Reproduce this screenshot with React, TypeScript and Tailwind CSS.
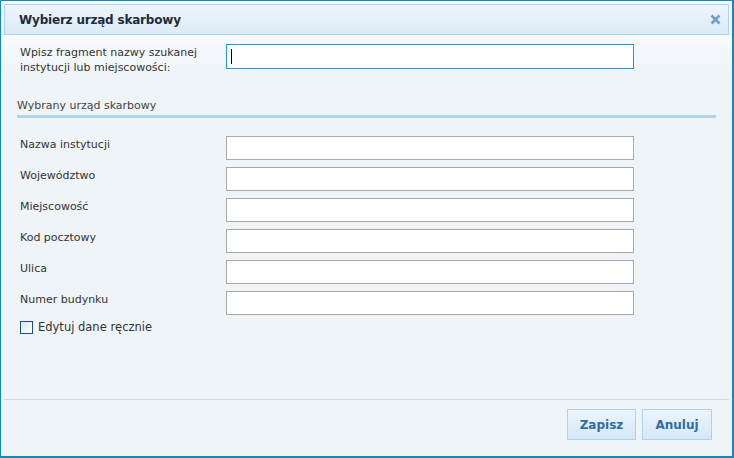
const fields = [
  "Nazwa instytucji",
  "Województwo",
  "Miejscowość",
  "Kod pocztowy",
  "Ulica",
  "Numer budynku",
];

const App = () => {
  return (
    <div
      className="w-[734px] h-[458px] bg-[#eff4f8] border border-[#0a8bc6] border-r-2 border-b-2 flex flex-col text-[#333]"
      style={{ fontFamily: "Tahoma, 'DejaVu Sans', sans-serif" }}
    >
      <div className="bg-gradient-to-b from-[#f9fbfd] to-[#eef3f8] pt-[3px] px-[3px]">
        <div className="h-[31px] border border-[#abd2ef] bg-gradient-to-b from-[#eef5fc] to-[#dcebf8] flex items-center justify-between pl-[14px] pr-[7px]">
          <span className="text-[12px] font-bold text-[#1d2c3a] tracking-[-0.2px]">
            Wybierz urząd skarbowy
          </span>
          <svg width="11" height="11" viewBox="0 0 11 11">
            <path d="M1.5 1.5 L9.5 9.5 M9.5 1.5 L1.5 9.5" stroke="#6ea1cc" strokeWidth="2.6" />
          </svg>
        </div>
      </div>

      <div className="flex-1 flex flex-col bg-gradient-to-b from-[#f9fbfd] to-[#eff4f8] bg-no-repeat [background-size:100%_40px]">
        <div className="flex items-start pt-[9px] pl-[19px]">
          <label className="w-[206px] text-[11px] leading-[15px] text-[#333] pt-[1px]">
            Wpisz fragment nazwy szukanej
            <br />
            instytucji lub miejscowości:
          </label>
          <div className="w-[408px] h-[25px] border border-[#1b9ad6] bg-white flex items-center pl-[4px]">
            <div className="w-px h-[15px] bg-black" />
          </div>
        </div>

        <div className="mt-[21px] mx-[16px] border-b-[3px] border-[#b1d3e9] leading-[15px] pb-[2px]">
          <span className="text-[11px] text-[#444]">Wybrany urząd skarbowy</span>
        </div>

        <div className="flex flex-col gap-[7px] mt-[18px] pl-[19px]">
          {fields.map((f) => (
            <div key={f} className="flex items-start">
              <label className="w-[206px] text-[11px] leading-[15px] pt-[1px] text-[#333]">{f}</label>
              <div className="w-[408px] h-[24px] border border-[#a9a9a9] bg-white" />
            </div>
          ))}
          <div className="flex items-center gap-[5px] mt-[-3px]">
            <div className="w-[13px] h-[13px] border border-[#1e4f82] bg-gradient-to-br from-[#dfe3e8] to-white" />
            <span className="text-[11.5px] text-[#333]">Edytuj dane ręcznie</span>
          </div>
        </div>

        <div className="mt-auto mx-[3px] border-t border-[#d3d9de] h-[57px] flex items-start justify-end gap-[6px] pt-[9px] pr-[17px]">
          <button className="w-[69px] h-[31px] border border-[#abd2ef] bg-gradient-to-b from-[#ebf4fc] to-[#d6e8f7] text-[12px] font-bold text-[#2f6da3]">
            Zapisz
          </button>
          <button className="w-[70px] h-[31px] border border-[#abd2ef] bg-gradient-to-b from-[#ebf4fc] to-[#d6e8f7] text-[12px] font-bold text-[#2f6da3]">
            Anuluj
          </button>
        </div>
      </div>
    </div>
  );
};

export default App;
